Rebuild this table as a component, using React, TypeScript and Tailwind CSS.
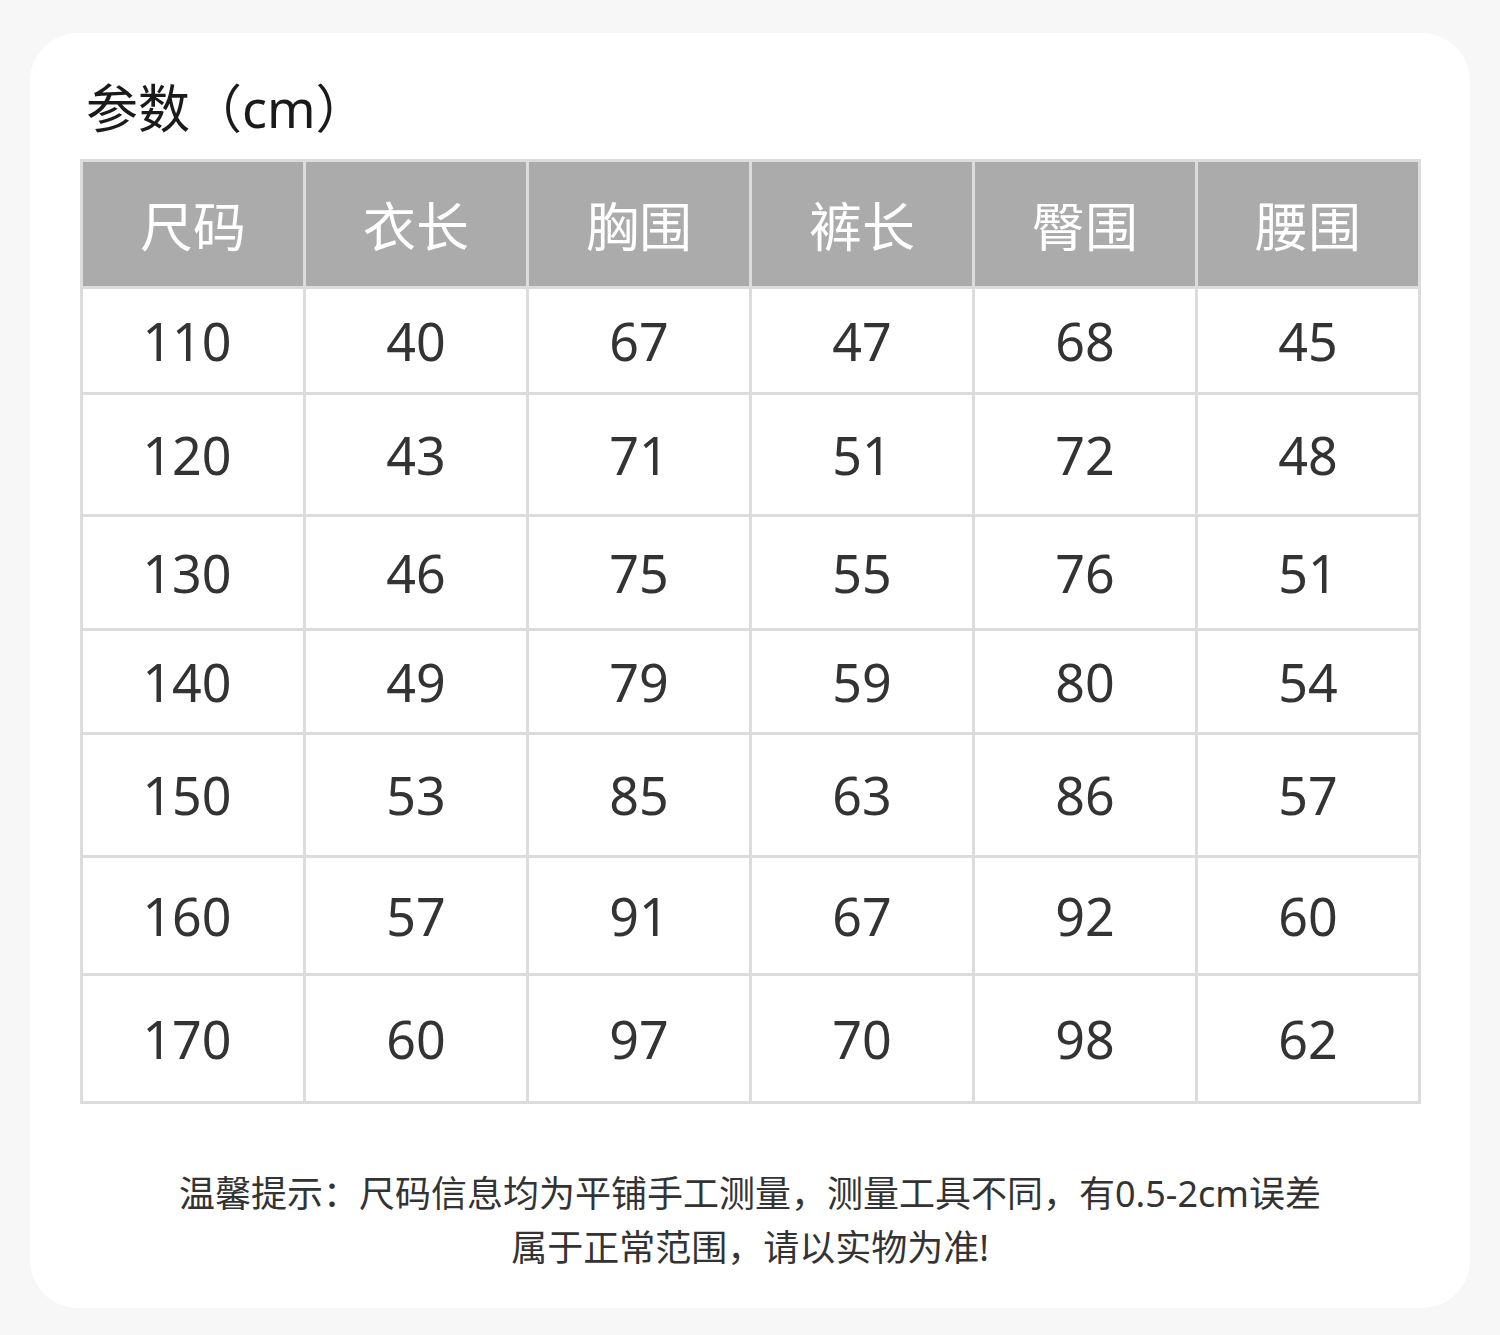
import React from 'react';

const headers = ['尺码', '衣长', '胸围', '裤长', '臀围', '腰围'];

const rows: number[][] = [
  [110, 40, 67, 47, 68, 45],
  [120, 43, 71, 51, 72, 48],
  [130, 46, 75, 55, 76, 51],
  [140, 49, 79, 59, 80, 54],
  [150, 53, 85, 63, 86, 57],
  [160, 57, 91, 67, 92, 60],
  [170, 60, 97, 70, 98, 62],
];

export default function App() {
  return (
    <div
      className="min-h-[1335px] w-[1500px] bg-[#f7f7f7] pt-[33px] px-[30px]"
      style={{ fontFamily: '"Noto Sans", "Noto Sans CJK SC", sans-serif' }}
    >
      <div className="w-[1440px] h-[1275px] bg-white rounded-[48px] flex flex-col">
        {/* Title */}
        <h1 className="mt-[49px] ml-[56px] text-[52px] leading-none text-[#1a1a1a]">
          参数（cm）
        </h1>

        {/* Size table */}
        <div className="mt-[25px] ml-[50px] w-[1341px] bg-[#dcdcdc] p-[3px] grid grid-cols-6 gap-[3px] grid-rows-[124px_103px_119px_111px_101px_120px_115px_125px]">
          {headers.map(h => (
            <div key={h} className="bg-[#ababab] flex items-center justify-center pt-[4px] text-white text-[53px] leading-none">
              {h}
            </div>
          ))}
          {rows.map(r =>
            r.map((v, i) => (
              <div
                key={`${r[0]}-${i}`}
                className={`bg-white flex items-center justify-center text-[#333333] text-[52px] leading-none ${i === 0 ? 'pr-[12px]' : ''}`}
              >
                {v}
              </div>
            ))
          )}
        </div>

        {/* Note */}
        <div className="mt-[63px] text-center text-[36px] leading-[54px] text-[#333333]">
          <p>温馨提示：尺码信息均为平铺手工测量，测量工具不同，有0.5-2cm误差</p>
          <p>属于正常范围，请以实物为准!</p>
        </div>
      </div>
    </div>
  );
}
